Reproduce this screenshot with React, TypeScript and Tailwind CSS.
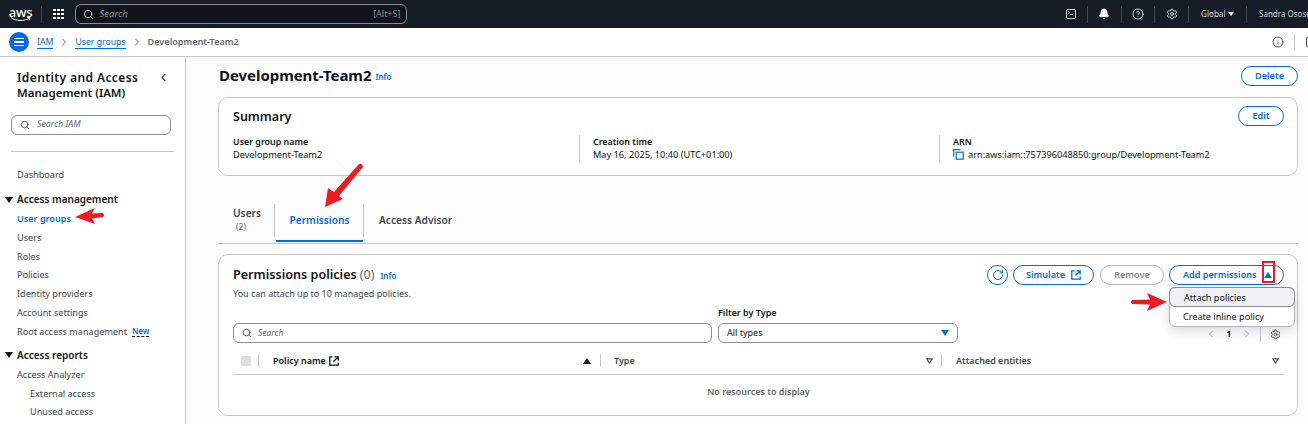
import { Bell, ChevronLeft, ChevronRight, CircleHelp, Info, RotateCw, Search, Settings, SquareTerminal } from "lucide-react";

const FONT = "font-['Noto_Sans','Open_Sans',sans-serif]";

function Divider() {
  return <div className="w-px h-[17px] bg-[#424650] shrink-0" />;
}

function SideLink({ label, indent }: { label: string; indent?: boolean }) {
  return <div className={`h-[18.75px] text-[9.1px] leading-[18.75px] text-[#424650] ${indent ? "pl-[30px]" : "pl-[17px]"}`}>{label}</div>;
}

function SideHeader({ label }: { label: string }) {
  return (
    <div className="flex items-center h-[21px] pl-[5px] text-[10px] font-semibold text-[#0f141a]">
      <span className="w-0 h-0 border-l-[4px] border-r-[4px] border-t-[6px] border-l-transparent border-r-transparent border-t-[#0f141a] mr-[4px]" />
      {label}
    </div>
  );
}

function SummaryCol({ label, className, children }: { label: string; className: string; children: React.ReactNode }) {
  return (
    <div className={className}>
      <div className="text-[8.9px] leading-[13px] font-semibold text-[#0f141a]">{label}</div>
      <div className="text-[9.2px] leading-[13px] text-[#0f141a] flex items-center">{children}</div>
    </div>
  );
}

function Caret({ up, outline }: { up?: boolean; outline?: boolean }) {
  if (outline) {
    return (
      <svg width="7" height="6" viewBox="0 0 7 6" className="shrink-0">
        <path d="M0.8 0.8h5.4L3.5 5z" fill="none" stroke="#424650" strokeWidth="1.2" />
      </svg>
    );
  }
  return (
    <svg width="8" height="6" viewBox="0 0 8 6" className="shrink-0">
      <path d={up ? "M0 6h8L4 0z" : "M0 0h8L4 6z"} fill="currentColor" />
    </svg>
  );
}

function ExtIcon() {
  return (
    <svg width="10" height="10" viewBox="0 0 10 10" fill="none" stroke="currentColor" strokeWidth="1.3" className="shrink-0">
      <path d="M3.5 0.8H0.8v8.4h8.4V6.5M5.5 0.8h3.7v3.7M9 1L4.5 5.5" />
    </svg>
  );
}

function CopyIcon() {
  return (
    <svg width="11" height="11" viewBox="0 0 11 11" fill="none" stroke="#006ce0" strokeWidth="1.2" className="shrink-0 mr-[4px]">
      <path d="M0.7 7.5V0.7h6.8" />
      <rect x="3.2" y="3.2" width="7" height="7" />
    </svg>
  );
}

function RedArrow({ className, w, h, d }: { className: string; w: number; h: number; d: string }) {
  return (
    <svg className={`absolute ${className}`} width={w} height={h} viewBox={`0 0 ${w} ${h}`}>
      <path d={d} fill="#ed1c24" />
    </svg>
  );
}

export default function App() {
  return (
    <div className={`${FONT} w-[1308px] h-[424px] overflow-hidden relative bg-[#fcfcfd]`}>
      {/* top bar */}
      <div className="h-[28px] bg-[#161d26] flex items-center text-[#d1d5db] overflow-hidden">
        <div className="w-[41px] shrink-0 flex flex-col items-center text-white">
          <span className="text-[13px] leading-[10px] font-medium tracking-[-0.3px]">aws</span>
          <svg width="22" height="5" viewBox="0 0 22 5">
            <path d="M1 0.8c5 3.4 13 3.4 18 0.6M17 0.5l3 0.2-0.8 2.6" fill="none" stroke="white" strokeWidth="1" />
          </svg>
        </div>
        <Divider />
        <div className="grid grid-cols-3 gap-[1.5px] ml-[11px] mr-[11px]">
          {Array.from({ length: 9 }).map((_, i) => (
            <span key={i} className="w-[2.5px] h-[2.5px] bg-white" />
          ))}
        </div>
        <div className="w-[332px] h-[20px] rounded-[6px] border border-[#8c8c94] bg-[#0f141a] flex items-center pl-[7px] pr-[5px]">
          <Search size={11} className="text-[#dbdbdb]" strokeWidth={2} />
          <span className="ml-[6px] text-[9.5px] italic text-[#8c8c94]">Search</span>
          <span className="ml-auto text-[9px] text-[#8c8c94]">[Alt+S]</span>
        </div>
        <div className="ml-auto flex items-center shrink-0 w-[243px]">
          <SquareTerminal size={12} className="text-white shrink-0" strokeWidth={1.6} />
          <div className="ml-[10px]"><Divider /></div>
          <Bell size={12} className="text-white ml-[10px] shrink-0" fill="white" strokeWidth={1.6} />
          <div className="ml-[11px]"><Divider /></div>
          <CircleHelp size={12} className="text-white ml-[10px] shrink-0" strokeWidth={1.6} />
          <div className="ml-[10px]"><Divider /></div>
          <Settings size={12} className="text-white ml-[11px] shrink-0" strokeWidth={1.6} />
          <div className="ml-[10px]"><Divider /></div>
          <span className="ml-[12px] w-[22px] text-[8.1px] text-[#d1d5db] shrink-0">Global</span>
          <span className="ml-[4px] text-white scale-75 shrink-0"><Caret /></span>
          <div className="ml-[11px]"><Divider /></div>
          <span className="ml-[12px] text-[8px] text-[#d1d5db] whitespace-nowrap shrink-0">Sandra Osose</span>
        </div>
      </div>

      {/* breadcrumbs */}
      <div className="h-[29px] bg-white border-b border-[#c6c6cd] flex items-center pl-[9px] text-[9.1px]">
        <div className="w-[20px] h-[20px] rounded-full bg-[#006ce0] flex flex-col items-center justify-center gap-[2px]">
          <span className="w-[10px] h-[1.5px] bg-white" />
          <span className="w-[10px] h-[1.5px] bg-white" />
          <span className="w-[10px] h-[1.5px] bg-white" />
        </div>
        <span className="ml-[8px] text-[8.7px] text-[#006ce0] border-b border-[#006ce0] leading-[12px]">IAM</span>
        <ChevronRight size={12} className="text-[#656871] mx-[5px]" />
        <span className="text-[8.7px] text-[#006ce0] border-b border-[#006ce0] leading-[12px]">User groups</span>
        <ChevronRight size={12} className="text-[#656871] mx-[5px]" />
        <span className="font-semibold text-[#656871]">Development-Team2</span>
        <div className="ml-auto flex items-center">
          <Info size={12} className="text-[#424650]" strokeWidth={1.8} />
          <div className="w-px h-[16px] bg-[#c6c6cd] ml-[10px]" />
          <span className="ml-[11px] w-[2px] h-[10px] rounded-l-[3px] border-l border-t border-b border-[#424650]" />
        </div>
      </div>

      <div className="flex h-[367px]">
        {/* side nav */}
        <div className="w-[186px] shrink-0 bg-white border-r border-[#c6c6cd]">
          <div className="pl-[17px] pr-[15px] pt-[13px] flex justify-between">
            <div className="font-semibold text-[#0f141a]">
              <div className="text-[12px] leading-[15px] tracking-[0.4px]">Identity and Access</div>
              <div className="text-[11.5px] leading-[15px]">Management (IAM)</div>
            </div>
            <ChevronLeft size={13} className="text-[#424650] mt-[1px]" />
          </div>
          <div className="ml-[11px] mt-[15px] w-[160px] h-[20px] rounded-[6px] border border-[#8c8c94] flex items-center pl-[8px]">
            <Search size={10} className="text-[#424650]" />
            <span className="ml-[7px] text-[8.8px] italic text-[#656871]">Search IAM</span>
          </div>
          <div className="ml-[11px] mt-[16px] w-[163px] h-px bg-[#c6c6cd]" />
          <div className="mt-[13.5px]">
            <SideLink label="Dashboard" />
          </div>
          <div className="mt-[5px]">
            <SideHeader label="Access management" />
          </div>
          <div className="h-[18.5px] pl-[17px] text-[9.1px] leading-[18.5px] font-semibold text-[#006ce0]">User groups</div>
          <SideLink label="Users" />
          <SideLink label="Roles" />
          <SideLink label="Policies" />
          <SideLink label="Identity providers" />
          <SideLink label="Account settings" />
          <div className="flex items-center h-[18.75px] pl-[17px] text-[9.1px] text-[#424650]">
            Root access management
            <span className="ml-[5px] text-[8px] leading-[10px] font-semibold text-[#006ce0] border-b border-dashed border-[#0f141a]">New</span>
          </div>
          <div className="mt-[3.5px]">
            <SideHeader label="Access reports" />
          </div>
          <SideLink label="Access Analyzer" />
          <SideLink label="External access" indent />
          <SideLink label="Unused access" indent />
        </div>

        {/* content */}
        <div className="flex-1 pl-[32px] pr-[10px] min-w-0">
          <div className="flex items-center h-[40px] pb-[3px]">
            <span className="text-[15px] font-bold text-[#0f141a] tracking-[-0.05px] ml-px">Development-Team2</span>
            <span className="ml-[4px] mt-[3px] text-[8px] font-semibold text-[#006ce0]">Info</span>
            <button className="ml-auto w-[57px] h-[20px] rounded-full border border-[#006ce0] text-[9.2px] font-semibold text-[#006ce0] bg-white">Delete</button>
          </div>

          {/* summary */}
          <div className="h-[79px] rounded-[10px] border border-[#c6c6cd] bg-white pl-[14px] pr-[13px] pt-[8px]">
            <div className="flex items-center justify-between h-[20px]">
              <span className="text-[12.5px] font-semibold text-[#0f141a] mt-[2px]">Summary</span>
              <button className="w-[46px] h-[20px] rounded-full border border-[#006ce0] text-[9.2px] font-semibold text-[#006ce0]">Edit</button>
            </div>
            <div className="flex mt-[9px]">
              <SummaryCol label="User group name" className="w-[346px] h-[27px]">Development-Team2</SummaryCol>
              <SummaryCol label="Creation time" className="w-[360px] h-[27px] border-l border-[#c6c6cd] pl-[13px]">May 16, 2025, 10:40 (UTC+01:00)</SummaryCol>
              <SummaryCol label="ARN" className="flex-1 h-[27px] border-l border-[#c6c6cd] pl-[13px]">
                <CopyIcon />
                arn:aws:iam::757396048850:group/Development-Team2
              </SummaryCol>
            </div>
          </div>

          {/* tabs */}
          <div className="mt-[24px] h-[44px] border-b border-[#c6c6cd] flex text-[10.2px] font-semibold">
            <div className="w-[57px] h-[33px] mt-[4px] pl-[15px] pt-[3px] text-[#424650] leading-[13px] border-r border-[#c6c6cd]">
              Users
              <div className="text-[8.5px] font-normal text-[#656871] pl-[3px]">(2)</div>
            </div>
            <div className="ml-[1px] w-[87px] h-[42px] pt-[1px] border-b-[2px] border-[#006ce0] text-[#006ce0] flex items-center justify-center">Permissions</div>
            <div className="h-[33px] mt-[4px] border-l border-[#c6c6cd] pl-[15px] pt-[9px] text-[#424650]">Access Advisor</div>
          </div>

          {/* permissions card */}
          <div className="mt-[10px] h-[162px] rounded-[10px] border border-[#c6c6cd] bg-white pl-[14px] pr-[13px] pt-[11px]">
            <div className="flex items-start h-[38px]">
              <div>
                <div className="flex items-baseline">
                  <span className="text-[12.6px] leading-[17px] font-semibold text-[#0f141a]">Permissions policies</span>
                  <span className="ml-[3px] text-[12.5px] leading-[17px] text-[#656871]">(0)</span>
                  <span className="ml-[6px] text-[8px] font-semibold text-[#006ce0]">Info</span>
                </div>
                <div className="text-[9px] leading-[15px] text-[#424650] mt-[3px]">You can attach up to 10 managed policies.</div>
              </div>
              <div className="ml-auto flex items-center gap-[5px] text-[9.1px] font-semibold -mt-[1px]">
                <div className="w-[21px] h-[20px] rounded-full border border-[#006ce0] flex items-center justify-center">
                  <RotateCw size={12} className="text-[#006ce0]" />
                </div>
                <button className="w-[81px] h-[20px] mr-[1px] rounded-full border border-[#006ce0] text-[#006ce0] flex items-center justify-center gap-[6px]">
                  Simulate
                  <ExtIcon />
                </button>
                <button className="w-[64px] h-[20px] rounded-full border border-[#b4b4bb] text-[#8c8c94]">Remove</button>
                <button className="w-[115px] h-[20px] rounded-full border border-[#006ce0] text-[#006ce0] flex items-center pl-[13px]">
                  Add permissions
                  <span className="ml-[7px]"><Caret up /></span>
                </button>
              </div>
            </div>

            <div className="flex items-end gap-[6px] h-[39px]">
              <div className="w-[479px] h-[20px] rounded-[6px] border border-[#8c8c94] flex items-center pl-[8px]">
                <Search size={10} className="text-[#424650]" />
                <span className="ml-[6px] text-[8.5px] italic text-[#656871]">Search</span>
              </div>
              <div className="w-[240px]">
                <div className="text-[9px] leading-[12px] font-semibold text-[#0f141a] mb-[4px]">Filter by Type</div>
                <div className="h-[20px] rounded-[6px] border border-[#8c8c94] flex items-center px-[8px] text-[9px] text-[#0f141a]">
                  All types
                  <span className="ml-auto text-[#006ce0]"><Caret /></span>
                </div>
              </div>
              <div className="ml-auto flex items-center h-[20px] translate-y-[1px] pr-[3px]">
                <ChevronLeft size={12} className="text-[#b4b4bb] shrink-0" />
                <span className="mx-[9.5px] text-[9px] font-bold text-[#0f141a]">1</span>
                <ChevronRight size={12} className="text-[#b4b4bb] shrink-0" />
                <div className="w-px h-[16px] bg-[#c6c6cd] ml-[7px] mr-[9px]" />
                <Settings size={11} className="text-[#424650] shrink-0" />
              </div>
            </div>

            {/* table header */}
            <div className="flex items-center h-[28px] mt-[4px] border-b border-[#c6c6cd] text-[9px] font-semibold text-[#0f141a]">
              <span className="ml-[8px] w-[10px] h-[10px] rounded-[2px] bg-[#dedee3]" />
              <span className="ml-[7px] w-px h-[13px] bg-[#c6c6cd]" />
              <div className="ml-[14px] w-[318px] flex items-center">
                <span>Policy name</span>
                <span className="ml-[3px]"><ExtIcon /></span>
                <span className="ml-auto"><Caret up /></span>
              </div>
              <span className="ml-[9px] w-px h-[13px] bg-[#c6c6cd]" />
              <div className="ml-[13px] w-[319px] flex items-center text-[#424650]">
                Type
                <span className="ml-auto"><Caret outline /></span>
              </div>
              <span className="ml-[8px] w-px h-[13px] bg-[#c6c6cd]" />
              <div className="ml-[14px] flex-1 flex items-center text-[#424650] pr-[5px]">
                Attached entities
                <span className="ml-auto"><Caret outline /></span>
              </div>
            </div>
            <div className="mt-[10px] text-center text-[9px] font-semibold text-[#656871]">No resources to display</div>
          </div>
        </div>
      </div>

      {/* dropdown */}
      <div className="absolute left-[1169px] top-[287px] w-[126px] h-[40px] rounded-[6px] border border-[#b4b4bb] bg-white shadow-[0_4px_12px_rgba(0,7,22,0.15)] text-[9.1px] text-[#0f141a]">
        <div className="h-[20px] rounded-[6px] border border-[#8c8c94] bg-[#f0f0f4] -m-px flex items-center pl-[14px] pt-[1px]">Attach policies</div>
        <div className="h-[19px] mt-px flex items-center pl-[13px] pt-[1px]">Create inline policy</div>
      </div>

      {/* annotations */}
      <div className="absolute left-[1262px] top-[261px] w-[13px] h-[22px] border-2 border-[#ed1c24]" />
      <RedArrow className="left-[74px] top-[206px]" w={32} h={20} d="M1 11 L21 2 L18 7.5 L29 7 Q31 9 29 11 L18 12.5 L21 18 Z" />
      <RedArrow className="left-[1130px] top-[292px]" w={38} h={20} d="M37 10 L17 1 L20 7.5 L2 8 Q0 10 2 12 L20 12.5 L17 19 Z" />
      <RedArrow className="left-[323px] top-[161px]" w={42} h={48} d="M2 46 L5 27 L11 31 L36 3 Q39 2 40 6 L16 35 L20 38 Z" />
    </div>
  );
}
